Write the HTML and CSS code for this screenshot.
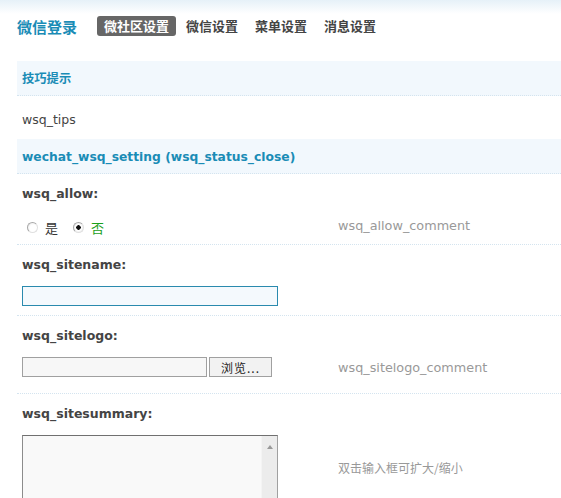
FILE: index.html
```html
<!DOCTYPE html>
<html>
  <head>
    <meta charset="utf-8">
    <title>微信登录</title>
    <link rel="stylesheet" href="styles.css">
  </head>
  <body>
    <div class="page">
        <div class="head">
            <h3>微信登录</h3>
            <ul class="tabs">
                <li class="current">微社区设置</li>
                <li>微信设置</li>
                <li>菜单设置</li>
                <li>消息设置</li>
            </ul>
        </div>
        <div class="th">技巧提示</div>
        <div class="tips">wsq_tips</div>
        <div class="th">wechat_wsq_setting (wsq_status_close)</div>

        <div class="label">wsq_allow:</div>
        <div class="row">
            <div class="field radios">
                <label><input type="radio" name="allow">是</label>
                <label class="on"><input type="radio" name="allow" checked>否</label>
            </div>
            <div class="comment">wsq_allow_comment</div>
        </div>

        <div class="label">wsq_sitename:</div>
        <div class="row">
            <div class="field">
                <input type="text" class="txt focus">
            </div>
            <div class="comment"></div>
        </div>

        <div class="label">wsq_sitelogo:</div>
        <div class="row tall">
            <div class="field file">
                <input type="text" class="filebox">
                <button>浏览...</button>
            </div>
            <div class="comment">wsq_sitelogo_comment</div>
        </div>

        <div class="label">wsq_sitesummary:</div>
        <div class="row last">
            <div class="field">
                <div class="area">
                    <textarea></textarea>
                    <div class="scroll"><span class="up"></span></div>
                </div>
            </div>
            <div class="comment mid">双击输入框可扩大/缩小</div>
        </div>
    </div>
  </body>
</html>
```

FILE: styles.css
```css
html, body {
    margin: 0;
    padding: 0;
}
body {
    background: linear-gradient(#e6f1f8, #ffffff 14px) no-repeat;
    font-family: "DejaVu Sans", "Noto Sans CJK SC", sans-serif;
    font-size: 12px;
    color: #444;
}
.page {
    padding-left: 17px;
}
.head {
    display: flex;
    align-items: center;
    height: 61px;
    padding-bottom: 9px;
    box-sizing: border-box;
}
.head h3 {
    margin: 0 20px 0 0;
    font-size: 15px;
    font-weight: bold;
    color: #1a8cb6;
    font-family: "Noto Sans CJK SC", sans-serif;
}
.tabs {
    display: flex;
    list-style: none;
    margin: 0;
    padding: 0;
    gap: 3px;
}
.tabs li {
    font-family: "Noto Sans CJK SC", sans-serif;
    font-size: 13px;
    font-weight: bold;
    color: #444;
    height: 20px;
    line-height: 20px;
    padding: 0 7px;
    border-radius: 3px;
}
.tabs li.current {
    background: #666;
    color: #fff;
}
.th {
    height: 34px;
    line-height: 36px;
    background: #f2f8fd;
    border-bottom: 1px dotted #d4e4ef;
    padding-left: 5px;
    font-size: 12.3px;
    font-weight: bold;
    color: #1a8cb6;
}
.tips {
    height: 43px;
    line-height: 47px;
    padding-left: 5px;
    font-size: 12.5px;
}
.label {
    height: 34px;
    line-height: 39px;
    padding-left: 5px;
    font-size: 12.5px;
    font-weight: bold;
}
.row {
    display: grid;
    grid-template-columns: 321px 1fr;
    height: 36px;
    border-bottom: 1px dotted #d4e4ef;
    box-sizing: content-box;
}
.row.tall {
    height: 43px;
}
.row.last {
    height: 120px;
    border-bottom: 0;
}
.field {
    padding: 7px 0 0 5px;
}
.comment {
    padding-top: 8px;
    line-height: 20px;
    color: #999;
    font-size: 12.8px;
}
.comment.mid {
    padding-top: 30px;
    font-family: "Noto Sans CJK SC", sans-serif;
    font-size: 12px;
}
.radios {
    display: flex;
    align-items: center;
    height: 20px;
    padding-top: 9px;
    font-family: "Noto Sans CJK SC", sans-serif;
    font-size: 13px;
    color: #333;
}
.radios label {
    display: flex;
    align-items: center;
    margin-right: 10px;
}
.radios label.on {
    color: #1aa01a;
}
.radios input {
    appearance: none;
    width: 11px;
    height: 11px;
    margin: 0 7px 0 5px;
    border-radius: 50%;
    border: 1px solid #a8a8a8;
    border-right-color: #e0e0e0;
    border-bottom-color: #e0e0e0;
    background: radial-gradient(circle at 60% 60%, #fff 45%, #e4e4e4);
    box-sizing: border-box;
}
.radios input:checked {
    background: radial-gradient(circle, #111 2px, #fff 2.5px, #fff 45%, #e4e4e4);
}
.txt {
    display: block;
    width: 256px;
    height: 20px;
    margin: 0;
    padding: 0 3px;
    box-sizing: border-box;
    border: 1px solid #2a8aae;
    background: #f4f9fd;
}
.file {
    display: flex;
    gap: 2px;
}
.filebox {
    width: 185px;
    height: 20px;
    margin: 0;
    box-sizing: border-box;
    border: 1px solid #a0a0a0;
    background: #f7f7f7;
}
.file button {
    width: 63px;
    height: 20px;
    margin: 0;
    padding: 0;
    box-sizing: border-box;
    border: 1px solid #a0a0a0;
    background: #f2f2f2;
    font-family: "Noto Sans CJK SC", sans-serif;
    font-size: 12px;
    color: #222;
    letter-spacing: 1px;
}
.area {
    display: flex;
    width: 256px;
    height: 110px;
    box-sizing: border-box;
    border: 1px solid #a0a0a0;
    border-top-color: #707070;
    border-left-color: #8c8c8c;
    background: #f9f9f9;
}
.area textarea {
    flex: 1;
    border: 0;
    margin: 0;
    background: transparent;
    resize: none;
    outline: none;
}
.scroll {
    width: 15px;
    background: #ececec;
    border-left: 1px solid #f4f4f4;
    display: flex;
    justify-content: center;
}
.scroll .up {
    margin-top: 9px;
    width: 0;
    height: 0;
    border-left: 3px solid transparent;
    border-right: 3px solid transparent;
    border-bottom: 4px solid #999;
}
```
